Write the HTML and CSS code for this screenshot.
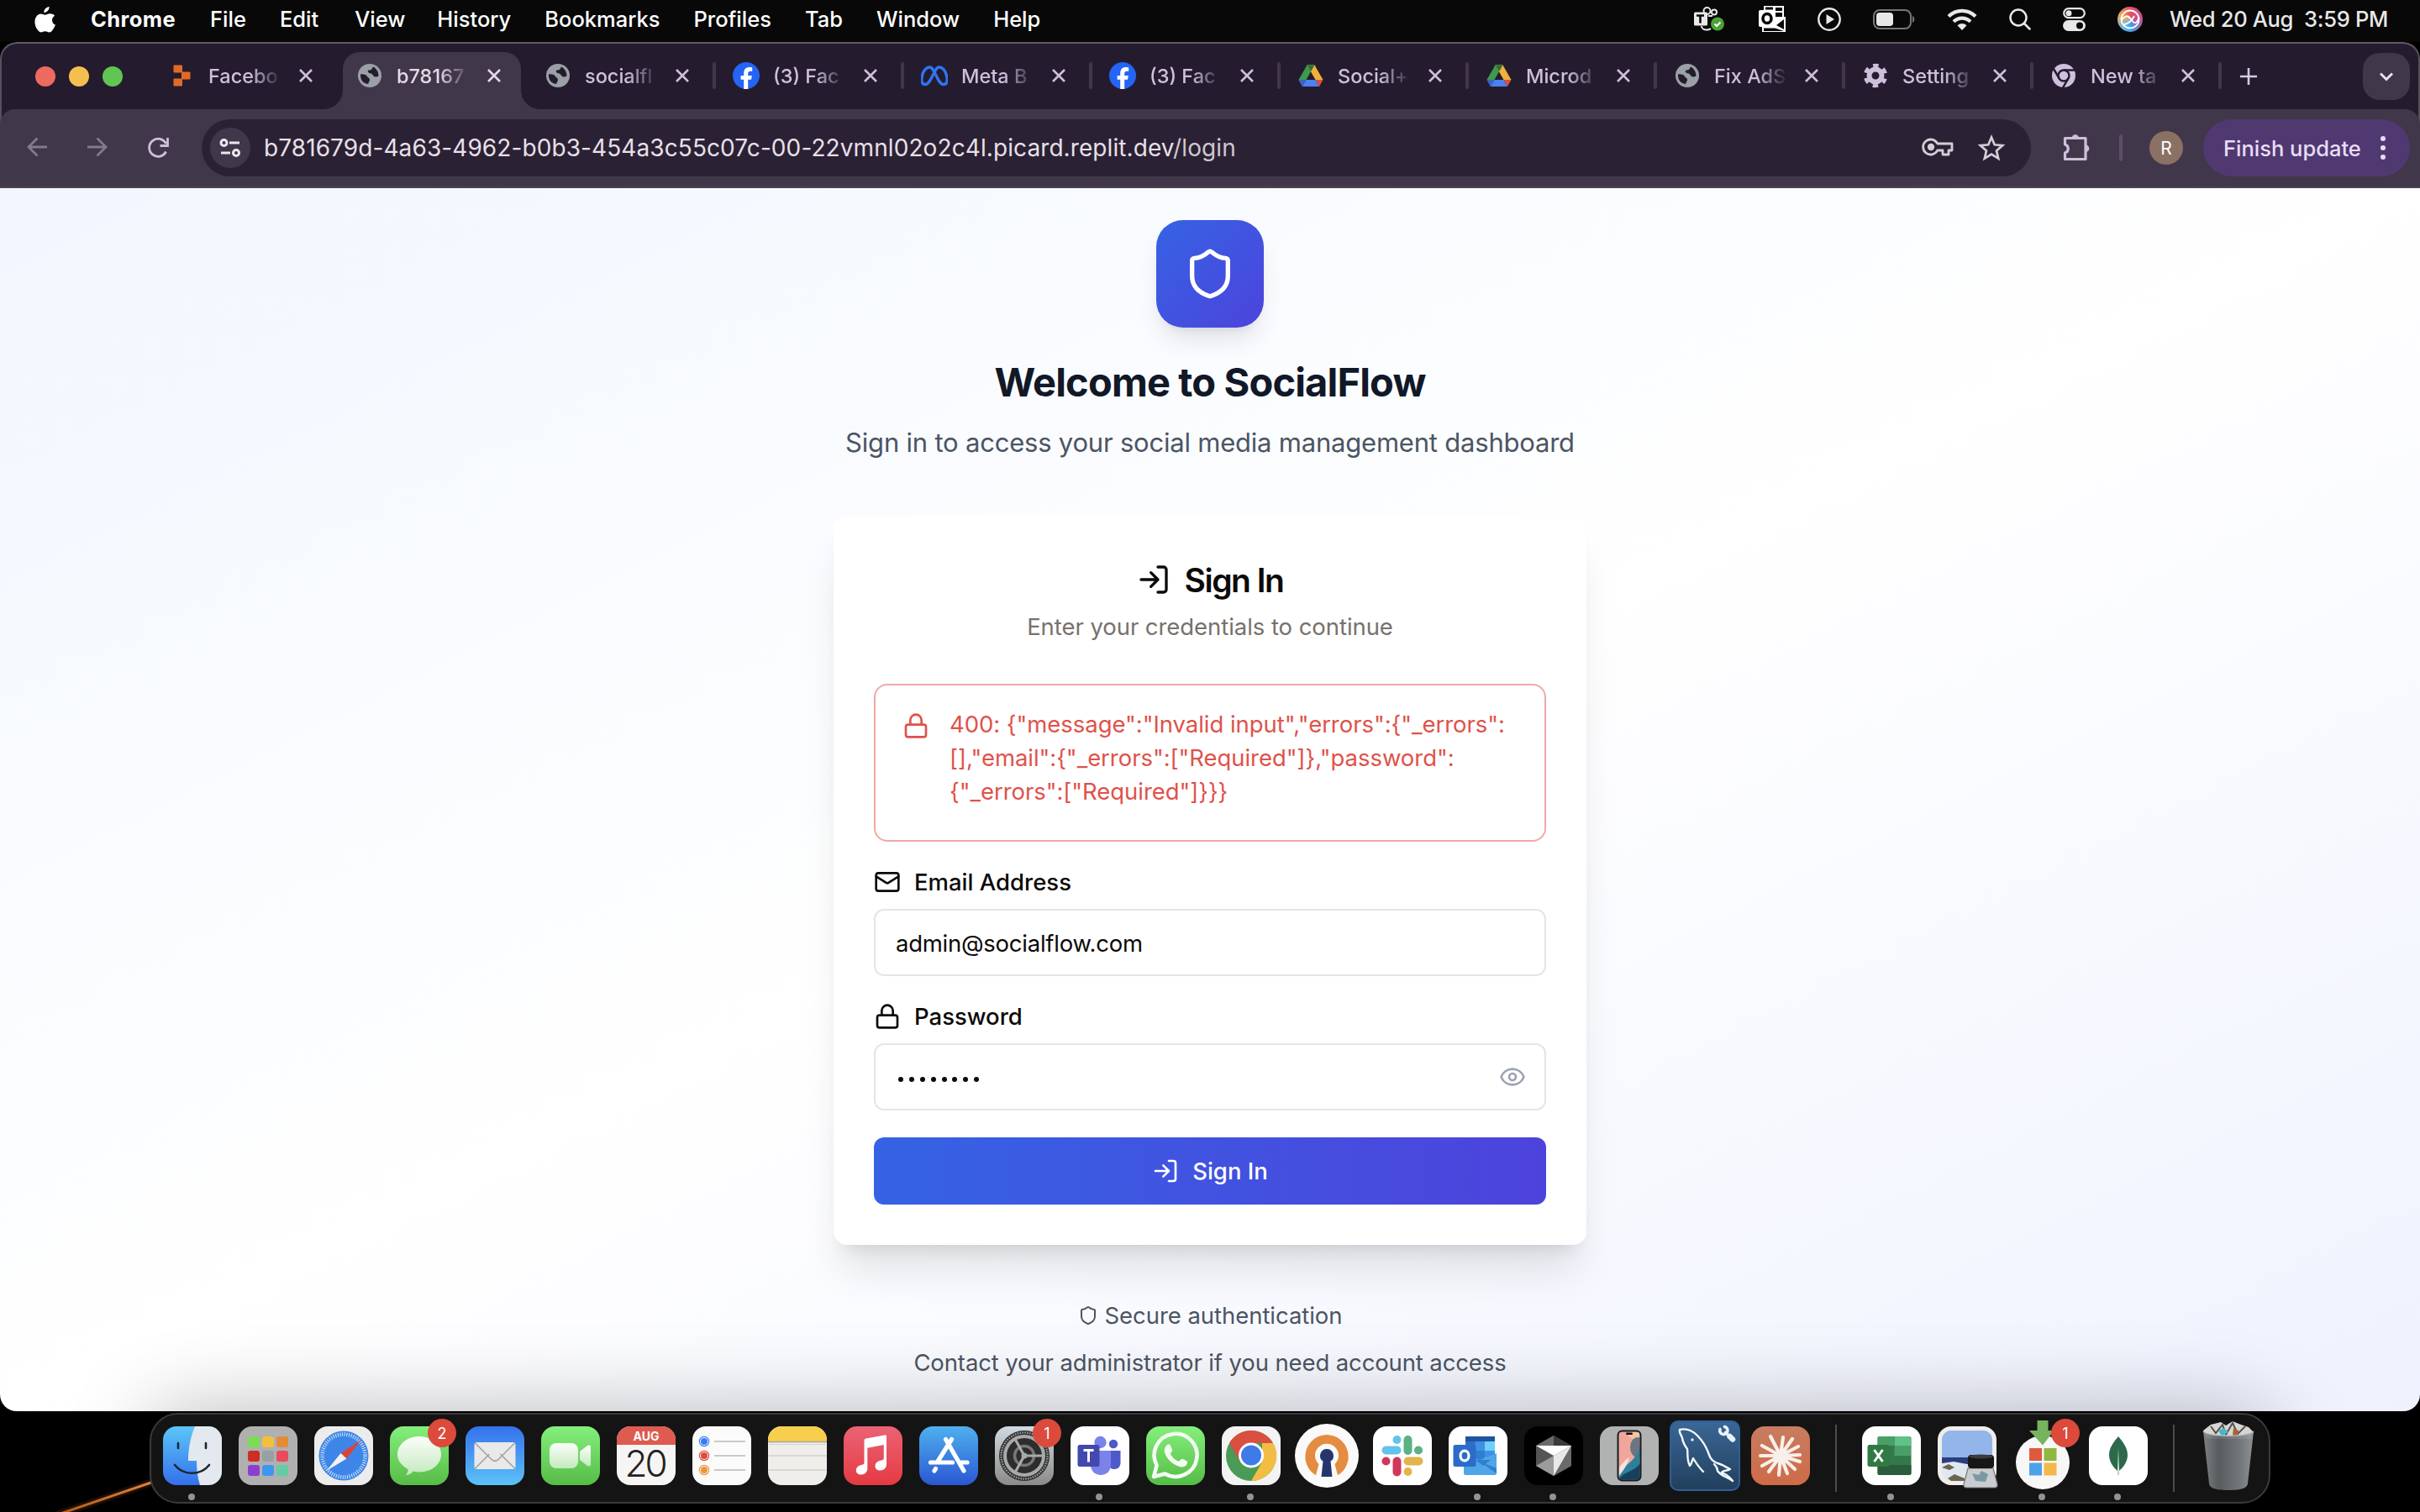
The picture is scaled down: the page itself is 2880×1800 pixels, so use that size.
FILE: index.html
```html
<!DOCTYPE html>
<html lang="en">
<head>
<meta charset="utf-8">
<title>Welcome to SocialFlow</title>
<link rel="stylesheet" href="styles.css">
</head>
<body>
<svg class="defs" width="0" height="0" aria-hidden="true">
  <defs>
    <symbol id="shield" viewBox="0 0 24 24"><path d="M20 13c0 5-3.5 7.5-7.66 8.95a1 1 0 0 1-.67-.01C7.5 20.5 4 18 4 13V6a1 1 0 0 1 1-1c2 0 4.5-1.2 6.24-2.72a1.17 1.17 0 0 1 1.52 0C14.51 3.81 17 5 19 5a1 1 0 0 1 1 1z"/></symbol>
    <symbol id="login" viewBox="0 0 24 24"><path d="M15 3h4a2 2 0 0 1 2 2v14a2 2 0 0 1-2 2h-4M10 17l5-5-5-5M15 12H3"/></symbol>
    <symbol id="lock" viewBox="0 0 24 24"><rect x="3" y="11" width="18" height="11" rx="2"/><path d="M7 11V7a5 5 0 0 1 10 0v4"/></symbol>
    <symbol id="mail" viewBox="0 0 24 24"><rect x="2" y="4" width="20" height="16" rx="2"/><path d="m22 7-8.97 5.7a1.94 1.94 0 0 1-2.06 0L2 7"/></symbol>
    <symbol id="eye" viewBox="0 0 24 24"><path d="M2.06 12.35a1 1 0 0 1 0-.7 10.75 10.75 0 0 1 19.88 0 1 1 0 0 1 0 .7 10.75 10.75 0 0 1-19.88 0"/><circle cx="12" cy="12" r="3"/></symbol>
    <symbol id="close" viewBox="0 0 24 24"><path d="M5 5l14 14M19 5L5 19" fill="none" stroke="currentColor" stroke-width="2.6"/></symbol>
    <symbol id="globe" viewBox="0 0 32 32"><circle cx="16" cy="16" r="14" fill="#9aa0a6"/><path d="M5 14.500c4-.5 7 .5 8 2.500s3 1.500 3 4-2 2.500-1.500 5C8.500 26 4.500 21 5 14.500zM20 5.500c-1.500 2-1 3.500-3.500 3.800s-3.500 1-2 3 3.500.5 4.500 2.200 2.500 3.500 5 3l2.500-1c0-5-2.500-9-6.500-11z" fill="#241c2e"/></symbol>
    <symbol id="facebook" viewBox="0 0 32 32"><circle cx="16" cy="16" r="16" fill="#2465f5"/><path d="M13.200 32V20.800H9.600V16h3.600v-2.300c0-5.400 2.300-7.700 7-7.700.9 0 2.400.2 3 .35v4.400h-1.900c-2.300 0-3.100.9-3.100 3.100V16h4.700l-.9 4.800h-3.800V32z" fill="#fff"/></symbol>
    <symbol id="drive" viewBox="0 0 32 32"><path d="M11.500 3.500h9L16 11.300 8.500 24.500 6 29 1.500 21z" fill="#3f9a4c"/><path d="M11.500 3.500h9l-4.500 7.800z" fill="#2b6c33"/><path d="M11.500 3.500h9L30.500 21h-9z" fill="#f0b03c"/><path d="M11.500 3.500h9L16 11.300z" fill="#2d7038"/><path d="M21.500 21h9L26 29z" fill="#d9503f"/><path d="M10.500 21h11L26 29H6z" fill="#4c82ee"/><path d="M1.500 21h9L6 29z" fill="#3b63c9"/></symbol>
  </defs>
</svg>

<header class="menubar">
  <svg class="apple" viewBox="0 0 26 32"><path d="M17.700 0c.2 1.900-.6 3.700-1.700 5-1.200 1.400-3 2.400-4.700 2.200-.2-1.800.7-3.700 1.700-4.800C14.200 1.100 16.200.1 17.700 0zM24.500 11c-2.100 1.300-3.200 3-3.200 5.400 0 2.700 1.500 4.900 4 5.900-.6 1.900-1.600 3.700-2.700 5.300-1.500 2.200-2.800 3.800-4.900 3.800-2 0-2.600-1.200-5-1.200-2.500 0-3.200 1.200-5.100 1.200-2 0-3.400-1.900-4.900-4C.9 24.800-.3 21.400.1 17.400c.5-5.500 3.900-8.700 7.600-8.700 2.100 0 3.700 1.300 5.200 1.300 1.300 0 3.200-1.400 5.700-1.400 2.200 0 4.500.9 5.900 2.400z" fill="#fff"/></svg>
  <nav class="menus">
    <span class="app-name">Chrome</span><span>File</span><span>Edit</span><span class="view">View</span><span>History</span><span>Bookmarks</span><span>Profiles</span><span>Tab</span><span>Window</span><span>Help</span>
  </nav>
  <div class="status">
    <svg width="36" height="30" viewBox="0 0 36 30"><g fill="none" stroke="#e8e8e8" stroke-width="2"><circle cx="15.500" cy="5" r="4"/><circle cx="24" cy="6.500" r="3"/><path d="M17 11h5M9 23c0 3 3 4.500 6 4.500 3 0 4-.5 5-1.500"/></g><rect x="0" y="6.500" width="16" height="16" rx="1.500" fill="#e8e8e8"/><path d="M3 10.500h9M7.500 10.500v9" stroke="#080808" stroke-width="2.600"/><circle cx="28" cy="20.500" r="8" fill="#4aa336"/><path d="M24.500 20.500l2.500 2.500 4.500-4.500" fill="none" stroke="#fff" stroke-width="2"/></svg>
    <svg width="32" height="34" viewBox="0 0 32 34"><path d="M6 1h24v14H6z" fill="#fff"/><path d="M8 2.500h9v3H8zM20 3h8v4h-8zM20 9h8v5h-8z" fill="#080808"/><path d="M4 14h28v18H4z" fill="#fff"/><path d="M6 27.500h13.500L30 31H6zM21 24l9-7v12z" fill="#080808"/><rect y="6" width="20" height="20" rx="2" fill="#fff"/><ellipse cx="10" cy="16" rx="5" ry="5.500" fill="none" stroke="#080808" stroke-width="3.600"/></svg>
    <svg width="28" height="28" viewBox="0 0 28 28"><circle cx="14" cy="14" r="12.700" fill="none" stroke="#e8e8e8" stroke-width="2.400"/><path d="M10.500 8v12l9.500-6z" fill="#e8e8e8"/></svg>
    <svg width="50" height="24" viewBox="0 0 50 24"><rect x="1" y="1" width="44" height="22" rx="7" fill="none" stroke="#777" stroke-width="2"/><rect x="4" y="4" width="20" height="16" rx="4" fill="#e8e8e8"/><path d="M47 8c3 1 3 7 0 8z" fill="#777"/></svg>
    <svg width="36" height="26" viewBox="0 0 36 26"><g fill="none" stroke="#e8e8e8" stroke-width="4.200"><path d="M2 9.500a22.500 22.500 0 0 1 32 0"/><path d="M8 15.800a14 14 0 0 1 20 0"/></g><path d="M12.500 20.200a8 8 0 0 1 11 0L18 26z" fill="#e8e8e8"/></svg>
    <svg width="26" height="26" viewBox="0 0 26 26"><g fill="none" stroke="#e8e8e8" stroke-width="2.500" stroke-linecap="round"><circle cx="11" cy="11" r="9.500"/><path d="M18 18l6.500 6.500"/></g></svg>
    <svg width="27" height="28" viewBox="0 0 27 28"><rect x="1.200" y="1.200" width="24.600" height="11" rx="5.500" fill="none" stroke="#e8e8e8" stroke-width="2.200"/><circle cx="7" cy="6.700" r="3.500" fill="#e8e8e8"/><rect y="15" width="27" height="13" rx="6.500" fill="#e8e8e8"/><circle cx="20" cy="21.500" r="4" fill="#080808"/></svg>
    <div class="siri"><svg width="30" height="30" viewBox="0 0 30 30"><g fill="none" stroke="#fff" stroke-width="1.800"><circle cx="15" cy="15" r="10.500"/><path d="M5 16c5-7 9-5 12 0s6 4 8-2M8 21c5-1 9-4 12-10"/></g></svg></div>
    <span class="clock">Wed 20 Aug&nbsp; 3:59 PM</span>
  </div>
</header>

<section class="window">
  <div class="chrome-ui">
    <div class="tabstrip">
      <div class="lights"><i class="red"></i><i class="yellow"></i><i class="green"></i></div>
      <div class="tabs">
        <div class="tab"><svg class="fav" viewBox="0 0 32 32"><path d="M7 4h9.500v8H7zM16.500 12H26v8h-9.500zM7 20h9.500v8H7z" fill="#e36a26" stroke="#e36a26" stroke-linejoin="round"/></svg><span class="title">Facebo</span><svg class="x"><use href="#close"/></svg></div>
        <div class="tab active"><svg class="fav"><use href="#globe"/></svg><span class="title">b78167</span><svg class="x"><use href="#close"/></svg></div>
        <div class="tab sep"><svg class="fav"><use href="#globe"/></svg><span class="title">socialfl</span><svg class="x"><use href="#close"/></svg></div>
        <div class="tab sep"><svg class="fav"><use href="#facebook"/></svg><span class="title">(3) Fac</span><svg class="x"><use href="#close"/></svg></div>
        <div class="tab sep"><svg class="fav" viewBox="0 0 32 32"><path d="M5 26.500C1 26.500 0 22 1.500 16S6.500 6 10.500 6c6 0 9 20.500 16.500 20.500 4 0 5-4.500 3.500-10.500S25.500 6 21.500 6c-6 0-9 20.500-16.500 20.500z" fill="none" stroke="#2f74f3" stroke-width="3.400"/></svg><span class="title">Meta B</span><svg class="x"><use href="#close"/></svg></div>
        <div class="tab sep"><svg class="fav"><use href="#facebook"/></svg><span class="title">(3) Fac</span><svg class="x"><use href="#close"/></svg></div>
        <div class="tab sep"><svg class="fav"><use href="#drive"/></svg><span class="title">Social+</span><svg class="x"><use href="#close"/></svg></div>
        <div class="tab sep"><svg class="fav"><use href="#drive"/></svg><span class="title">Microd</span><svg class="x"><use href="#close"/></svg></div>
        <div class="tab sep"><svg class="fav"><use href="#globe"/></svg><span class="title">Fix AdS</span><svg class="x"><use href="#close"/></svg></div>
        <div class="tab sep"><svg class="fav" viewBox="0 0 32 32"><g fill="none" stroke="#cdc0dc"><circle cx="16" cy="16" r="7.500" stroke-width="6"/><circle cx="16" cy="16" r="12" stroke-width="4.500" stroke-dasharray="6.280 6.280" stroke-dashoffset="3.140" transform="rotate(30 16 16)"/></g></svg><span class="title">Setting</span><svg class="x"><use href="#close"/></svg></div>
        <div class="tab sep"><svg class="fav" viewBox="0 0 32 32"><circle cx="16" cy="16" r="14" fill="#cdc0dc"/><circle cx="16" cy="16" r="6.500" fill="none" stroke="#241c2e" stroke-width="2.500"/><path d="M16 9.600h13M10.500 19.200L4 8M21.500 19.200L15 30.500" stroke="#241c2e" stroke-width="2.500"/></svg><span class="title">New ta</span><svg class="x"><use href="#close"/></svg></div>
      </div>
      <svg class="plus" viewBox="0 0 24 24"><path d="M12 2v20M2 12h20" stroke="#d6cbe2" stroke-width="2.600"/></svg>
      <div class="tab-search"><svg width="20" height="20" viewBox="0 0 20 20"><path d="M3 6.500l7 7 7-7" fill="none" stroke="#eae2f2" stroke-width="3"/></svg></div>
    </div>
    <div class="toolbar">
      <div class="nav-buttons">
        <svg class="dim" width="24" height="24" viewBox="0 0 24 24"><path d="M24 12H2M12.500 1.500L2 12l10.500 10.500"/></svg>
        <svg class="dim" width="24" height="24" viewBox="0 0 24 24"><path d="M0 12h22M11.500 1.500L22 12 11.500 22.500"/></svg>
        <svg width="26" height="26" viewBox="0 0 26 26"><path d="M21.500 17.500A10.500 10.500 0 1 1 21.500 8M23.500 1v9.500H14.500"/></svg>
      </div>
      <div class="omnibox">
        <div class="site-info"><svg width="26" height="24" viewBox="0 0 26 24"><g fill="none" stroke="#ece6ef" stroke-width="3"><circle cx="5.500" cy="6" r="3.500"/><path d="M12 6h12M2 18h11"/><circle cx="20" cy="18" r="3.500"/></g></svg></div>
        <span class="url">b781679d-4a63-4962-b0b3-454a3c55c07c-00-22vmnl02o2c4l.picard.replit.dev<span class="path">/login</span></span>
        <svg class="key" width="38" height="24" viewBox="0 0 38 24"><g fill="none" stroke="#d4cdd5" stroke-width="2.800"><path d="M18.700 7A9 9 0 1 0 18.700 15H25v5h7v-5h4V7z" stroke-linejoin="round"/></g><circle cx="11" cy="11" r="4.200" fill="#d4cdd5"/></svg>
        <svg class="star" width="32" height="32" viewBox="0 0 32 32"><path d="M16 3.500l3.700 8.800 9.500.8-7.200 6.300 2.200 9.300-8.200-5-8.200 5 2.200-9.300-7.200-6.300 9.500-.8z" fill="none" stroke="#d4cdd5" stroke-width="2.700"/></svg>
      </div>
      <svg class="puzzle" width="36" height="36" viewBox="0 0 36 36"><path d="M4.500 6.500H29v25H4.500v-7.500c5-1.500 5-8.500 0-10z" fill="none" stroke="#cdc0dc" stroke-width="3.200" stroke-linejoin="round"/><path d="M12.500 6.500a4.300 4.300 0 0 1 8.600 0zM29 14.500a4.300 4.300 0 0 1 0 8.600z" fill="#cdc0dc"/></svg>
      <i class="divider"></i>
      <div class="avatar">R</div>
      <div class="update"><span>Finish update</span><i class="kebab"></i></div>
    </div>
  </div>

  <main class="page">
    <div class="logo"><svg class="icon" width="64" height="64"><use href="#shield"/></svg></div>
    <h1>Welcome to SocialFlow</h1>
    <p class="subtitle">Sign in to access your social media management dashboard</p>
    <div class="card">
      <div class="card-title"><svg class="icon" width="40" height="40"><use href="#login"/></svg><h2>Sign In</h2></div>
      <p class="card-desc">Enter your credentials to continue</p>
      <div class="alert">
        <svg class="icon" width="32" height="32"><use href="#lock"/></svg>
        <p>400: {"message":"Invalid input","errors":{"_errors":<br>[],"email":{"_errors":["Required"]},"password":<br>{"_errors":["Required"]}}}</p>
      </div>
      <div class="label"><svg class="icon" width="32" height="32"><use href="#mail"/></svg><span>Email Address</span></div>
      <div class="input"><span class="email">admin@socialflow.com</span></div>
      <div class="label"><svg class="icon" width="32" height="32"><use href="#lock"/></svg><span>Password</span></div>
      <div class="input"><span class="dots"><i></i><i></i><i></i><i></i><i></i><i></i><i></i><i></i></span><svg class="icon eye" width="32" height="32"><use href="#eye"/></svg></div>
      <div class="submit"><svg class="icon" width="32" height="32"><use href="#login"/></svg><span>Sign In</span></div>
    </div>
    <div class="note"><svg class="icon" width="24" height="24"><use href="#shield"/></svg><span>Secure authentication</span></div>
    <p class="contact">Contact your administrator if you need account access</p>
    <div class="dock-shade"></div>
  </main>
</section>

<footer class="desktop">
  <svg class="streak" viewBox="0 0 220 120"><defs><linearGradient id="st" x1="0" x2="1"><stop offset="0" stop-color="#b0591c"/><stop offset="1" stop-color="#e08a45"/></linearGradient></defs><path d="M66 124L200 78" stroke="#5a2c0c" stroke-width="9" opacity=".35"/><path d="M66 124L200 78" stroke="url(#st)" stroke-width="3"/></svg>
  <div class="dock">
    <div class="cell run"><svg viewBox="0 0 70 70"><defs><linearGradient id="f1" x2="0" y2="1"><stop stop-color="#5cc6f8"/><stop offset="1" stop-color="#3470ec"/></linearGradient><clipPath id="sq"><rect width="70" height="70" rx="16"/></clipPath></defs><g clip-path="url(#sq)"><path d="M0 0h70v70H0z" fill="url(#f1)"/><path d="M38 0C33 12 30 26 30 41h10c0 10 1 20 4 29h26V0z" fill="#e4e8ef"/></g><path d="M18 20v6M51 20v6M14 46c10 13 31 13 41 0" fill="none" stroke="#1d2733" stroke-width="2.600" stroke-linecap="round"/></svg></div>
    <div class="cell"><svg viewBox="0 0 70 70"><rect width="70" height="70" rx="16" fill="#b0b0b0"/><g><rect x="11" y="12" width="14" height="13" rx="3" fill="#79dd52"/><rect x="28" y="12" width="14" height="13" rx="3" fill="#f3bf3e"/><rect x="45" y="12" width="14" height="13" rx="3" fill="#e58b35"/><rect x="11" y="29" width="14" height="13" rx="3" fill="#cb2f24"/><rect x="28" y="29" width="14" height="13" rx="3" fill="#96a0a5"/><rect x="45" y="29" width="14" height="13" rx="3" fill="#e94b5d"/><rect x="11" y="46" width="14" height="13" rx="3" fill="#8c3fce"/><rect x="28" y="46" width="14" height="13" rx="3" fill="#3c97f3"/><rect x="45" y="46" width="14" height="13" rx="3" fill="#62cda5"/></g></svg></div>
    <div class="cell"><svg viewBox="0 0 70 70"><rect width="70" height="70" rx="16" fill="#ececec"/><circle cx="35" cy="35" r="29.500" fill="#3d86e8"/><circle cx="35" cy="35" r="25.500" fill="none" stroke="#d7e8fb" stroke-width="4.500" stroke-dasharray="1 1.670"/><path d="M56 16L38.500 38.500 31.500 32z" fill="#dc4437"/><path d="M14.500 53L38.500 38.500 31.500 32z" fill="#f2f2f2"/></svg></div>
    <div class="cell"><svg viewBox="0 0 70 70"><defs><linearGradient id="gr" x2="0" y2="1"><stop stop-color="#84ef7c"/><stop offset="1" stop-color="#56bc47"/></linearGradient><linearGradient id="bb" x2="0" y2="1"><stop stop-color="#fbfefb"/><stop offset="1" stop-color="#c4e9bd"/></linearGradient></defs><rect width="70" height="70" rx="16" fill="url(#gr)"/><path d="M35 12c14.500 0 26 9.500 26 21.500S49.500 54.500 35 54.500c-2.500 0-5-.3-7.200-.9-2 2.600-5 4.200-9 4.600 2-2 3-4.500 2.600-7.300C14 47 9 40.700 9 33.500 9 21.500 20.500 12 35 12z" fill="url(#bb)"/></svg><b class="badge">2</b></div>
    <div class="cell"><svg viewBox="0 0 70 70"><defs><linearGradient id="ml" x2="0" y2="1"><stop stop-color="#3571ec"/><stop offset="1" stop-color="#5cc2f7"/></linearGradient></defs><rect width="70" height="70" rx="16" fill="url(#ml)"/><rect x="10.500" y="19" width="49" height="32" rx="3" fill="#e9e9e9"/><path d="M11.500 50l17-17M58.500 50l-17-17M11.500 20l19 19c3 3 6 3 9 0l19-19" fill="none" stroke="#a5a5a5" stroke-width="1.700"/></svg></div>
    <div class="cell"><svg viewBox="0 0 70 70"><rect width="70" height="70" rx="16" fill="url(#gr)"/><rect x="10" y="20" width="34" height="30" rx="8" fill="url(#bb)"/><path d="M46 30l9-7c2-1 4-.5 4 1.500v21c0 2-2 2.500-4 1.500l-9-7z" fill="url(#bb)"/></svg></div>
    <div class="cell"><svg viewBox="0 0 70 70"><g clip-path="url(#sq)"><path d="M0 0h70v70H0z" fill="#f6f5f3"/><path d="M0 0h70v22H0z" fill="#de5b4f"/></g><text x="35" y="17" class="cal-month">AUG</text><text x="33.500" y="60" class="cal-day">20</text></svg></div>
    <div class="cell"><svg viewBox="0 0 70 70"><rect width="70" height="70" rx="16" fill="#fbfbfb"/><path d="M26 18h37M26 35h37M26 52h37" stroke="#b9b9b9" stroke-width="1.400"/><g fill="none" stroke-width="1.200"><circle cx="14" cy="18" r="5.600" stroke="#3a7bf0"/><circle cx="14" cy="35" r="5.600" stroke="#df4a3a"/><circle cx="14" cy="52" r="5.600" stroke="#e9973a"/></g><circle cx="14" cy="18" r="4" fill="#3a7bf0"/><circle cx="14" cy="35" r="4" fill="#df4a3a"/><circle cx="14" cy="52" r="4" fill="#e9973a"/></svg></div>
    <div class="cell"><svg viewBox="0 0 70 70"><g clip-path="url(#sq)"><path d="M0 0h70v70H0z" fill="#efeeea"/><path d="M0 0h70v18H0z" fill="#f8cf4d"/><path d="M0 18.500h70" stroke="#a9a59a" stroke-width="1.500"/><path d="M2 21.500h66" stroke="#b9b7b0" stroke-dasharray="1.200 1.200"/><path d="M0 35h70M0 52h70" stroke="#d2d1cc" stroke-width="1.400"/></g></svg></div>
    <div class="cell"><svg viewBox="0 0 70 70"><defs><linearGradient id="mu" x2="0" y2="1"><stop stop-color="#eb6375"/><stop offset="1" stop-color="#e53a42"/></linearGradient></defs><rect width="70" height="70" rx="16" fill="url(#mu)"/><path d="M24.500 17c0-1.500.8-2.300 2.200-2.600l22-4c1.500-.3 2.300.4 2.300 1.800V45c0 4.500-3 7.500-7.500 7.500-3.500 0-6-2-6-5 0-4 3-6 6.500-6.700 3-.6 3.800-1 3.800-3V22l-19.500 3.700V50c0 4.500-3 7.500-7.500 7.500-3.500 0-6-2-6-5 0-4 3-5.900 6.500-6.600 2.500-.5 3.200-1.200 3.200-3z" fill="#fff"/></svg></div>
    <div class="cell"><svg viewBox="0 0 70 70"><defs><linearGradient id="as" x2="0" y2="1"><stop stop-color="#4fb0ee"/><stop offset="1" stop-color="#2a57d3"/></linearGradient></defs><rect width="70" height="70" rx="16" fill="url(#as)"/><g stroke="#fff" stroke-width="5.200" stroke-linecap="round"><path d="M38.500 15.500L22.500 41M31.500 15.500L53 53M18 53l1.500-2.500M13.500 43h26M48 43h9"/></g></svg></div>
    <div class="cell"><svg viewBox="0 0 70 70"><defs><linearGradient id="se" x2="0" y2="1"><stop stop-color="#cfdbe2"/><stop offset="1" stop-color="#8b8a87"/></linearGradient></defs><rect width="70" height="70" rx="16" fill="url(#se)"/><circle cx="35" cy="35" r="30" fill="#2d2d2d"/><circle cx="35" cy="35" r="27.500" fill="none" stroke="#999" stroke-width="2.500" stroke-dasharray="1.600 1.280"/><g fill="none" stroke="#a7aaab"><circle cx="35" cy="35" r="23" stroke-width="4"/><circle cx="35" cy="35" r="11.500" stroke-width="3.500" stroke="#777"/><path d="M35 35h21M35 35L24.500 16M35 35L24.500 54" stroke-width="3.200"/></g><circle cx="35" cy="35" r="3.500" fill="#a7aaab"/></svg><b class="badge">1</b></div>
    <div class="cell run"><svg viewBox="0 0 70 70"><rect width="70" height="70" rx="16" fill="#fff"/><circle cx="35.500" cy="19" r="7.200" fill="#7b83eb"/><circle cx="51" cy="21" r="5.200" fill="#5059c9"/><path d="M46 29h13.500v14c0 5-3 8-7 8s-7-2-7-6z" fill="#5059c9"/><path d="M24 29h24v17c0 7-5 12-12 12S24 53 24 46z" fill="#7b83eb"/><rect x="8.500" y="22" width="26" height="26" rx="2.500" fill="#4248ae"/><path d="M15.500 28.500h12M21.500 28.500v14" stroke="#fff" stroke-width="3"/></svg></div>
    <div class="cell"><svg viewBox="0 0 70 70"><rect width="70" height="70" rx="16" fill="url(#gr)"/><path d="M9 60l3.700-13.500A25.500 25.500 0 1 1 22.500 56.500z" fill="none" stroke="#f3fbf2" stroke-width="4.600" stroke-linejoin="round"/><path d="M24.500 22.500c1.500-1.700 3.500-1.500 4.300.3l2.200 5c.5 1.200-.2 2.300-2.200 4.700 2 4.500 5.500 7.500 10.200 9.300 2.500-3 3-3.500 4.300-3l5 2.500c1.500.9.800 3.500-.8 5.200-2 2-5 2.500-8.500 1.300C31 45 25.500 39.500 22.500 32.500c-1.500-4-.5-7.500 2-10z" fill="#f3fbf2"/></svg></div>
    <div class="cell run"><svg viewBox="0 0 70 70"><rect width="70" height="70" rx="16" fill="#f3f3f3"/><circle cx="35" cy="35" r="30" fill="#4a9b55"/><path d="M9 20a30 30 0 0 1 52 0H35v15z" fill="#d94f40"/><path d="M9 20l13 22.500L35 20z" fill="#d94f40"/><path d="M61 20A30 30 0 0 1 35 65l13-22.500V20z" fill="#f3bd43"/><circle cx="35" cy="34.500" r="15" fill="#fff"/><circle cx="35" cy="34.500" r="12" fill="#4079e8"/></svg></div>
    <div class="cell"><svg class="ovpn" viewBox="0 0 76 76"><circle cx="38" cy="38" r="38" fill="#fafafa"/><path d="M38 13a26 26 0 0 0-13 48.300L28.500 48a14 14 0 1 1 19 0L51 61.300A26 26 0 0 0 38 13z" fill="#e58c40"/><path d="M38 30a8 8 0 0 0-4.500 14.600L31.500 63h13l-2-18.400A8 8 0 0 0 38 30z" fill="#26356b"/></svg></div>
    <div class="cell"><svg viewBox="0 0 70 70"><rect width="70" height="70" rx="16" fill="#fff"/><g stroke-width="10" stroke-linecap="round"><path d="M15.500 28.500h13" stroke="#64c3ec"/><path d="M28.500 16h.01" stroke="#64c3ec"/><path d="M41.500 16v13" stroke="#5bb282"/><path d="M54 28.500h.01" stroke="#5bb282"/><path d="M41.500 41.500h13" stroke="#e2b44a"/><path d="M41.500 54h.01" stroke="#e2b44a"/><path d="M28.500 41.500v13" stroke="#cf375c"/><path d="M15.500 41.500h.01" stroke="#cf375c"/></g></svg></div>
    <div class="cell run"><svg viewBox="0 0 70 70"><rect width="70" height="70" rx="16" fill="#fff"/><path d="M20 14a2 2 0 0 1 2-2h31a2 2 0 0 1 2 2v16H20z" fill="#2b6fc9"/><path d="M20 12h35v6H20z" fill="#1f559f"/><path d="M43 18h12v11H43z" fill="#6fd1fa"/><path d="M31.500 18H43v11H31.500z" fill="#3e92e3"/><path d="M31.500 29H43v11H31.500z" fill="#2f7fd0"/><path d="M43 29h12v8H43z" fill="#3e92e3"/><path d="M18 32l19 8 20-8v24a2 2 0 0 1-2 2H20a2 2 0 0 1-2-2z" fill="#4fa5e6"/><path d="M32 40h18l-9 7zM57 56L37 42l20 8z" fill="#2f7fd0"/><rect x="5.500" y="22" width="27" height="26" rx="2.500" fill="#2b6cc9"/><ellipse cx="19" cy="35" rx="5" ry="5.800" fill="none" stroke="#fff" stroke-width="3.200"/></svg></div>
    <div class="cell run"><svg viewBox="0 0 70 70"><rect width="70" height="70" rx="16" fill="#000"/><path d="M35 11l21 12v24L35 59 14 47V23z" fill="#555"/><path d="M35 11l21 12H14z" fill="#3b3b3b"/><path d="M35 11v12H14z" fill="#6b6b6b"/><path d="M14 23h42L35 35z" fill="#fff"/><path d="M35 35v24L14 47z" fill="#9b9b9b"/><path d="M56 23v24L35 59z" fill="#6a6a6a"/><path d="M56 23L35 59V35z" fill="#e8e8e8"/></svg></div>
    <div class="cell"><svg viewBox="0 0 70 70"><defs><clipPath id="ph"><rect x="22.500" y="6.500" width="25" height="57" rx="4"/></clipPath></defs><rect width="70" height="70" rx="16" fill="#b1b3b3"/><g clip-path="url(#ph)"><path d="M22 6h26v58H22z" fill="#f0a69b"/><path d="M48 6v14L34 12V6z" fill="#f4c4a0"/><ellipse cx="45" cy="25" rx="9" ry="12" fill="#6b7482"/><path d="M22 64c2-20 18-16 26-40v40z" fill="#2a819b"/><path d="M22 64c5-10 20-10 26-20v20z" fill="#16405d"/><path d="M22 60c6-7 11-15 13-23-6 4-11 10-13 14z" fill="#f8e2dc"/></g><rect x="21.500" y="5.500" width="27" height="59" rx="5" fill="none" stroke="#191c20" stroke-width="2"/><rect x="31" y="7.500" width="8" height="2.500" rx="1.200" fill="#111"/></svg></div>
    <div class="cell"><svg class="mysql" viewBox="0 0 84 84"><defs><linearGradient id="my" x2="0" y2="1"><stop stop-color="#3a6897"/><stop offset="1" stop-color="#223f5c"/></linearGradient></defs><rect x="1" y="1" width="82" height="82" rx="9" fill="url(#my)" stroke="#2f5f95" stroke-width="2"/><path d="M12 11c8-2 15 1 21 7s11 14 14 23c2 6 5 8 10 10 5 1 9 4 15 7-3 2-8 1-10 4 5 2 9 4 13 10-7-5-14-6-18-12 0-3-1-5-4-8M12 11c-1 4 2 6 3 10 1 6 3 9 6 13 1 6-1 12 3 20 2-1 2-5 4-9 3 5 7 11 12 16" fill="none" stroke="#f3f8fc" stroke-width="2.400" stroke-linejoin="round" stroke-linecap="round"/><circle cx="27" cy="23" r="1.700" fill="#f3f8fc"/><g fill="none" stroke="#e8f2fa" stroke-linecap="round"><path d="M60 10.500a4.600 4.600 0 1 0 5.500-3" stroke-width="3.600"/><path d="M66.500 14.500l4 3.500" stroke-width="3.600"/><path d="M71.500 19l3.500 3.500" stroke-width="6.500"/></g></svg></div>
    <div class="cell"><svg viewBox="0 0 70 70"><defs><linearGradient id="cl" x2="0" y2="1"><stop stop-color="#c87c60"/><stop offset="1" stop-color="#cf6b47"/></linearGradient></defs><rect width="70" height="70" rx="16" fill="url(#cl)"/><g stroke="#f9efea" stroke-width="4.200" stroke-linecap="round"><path d="M35 35L23 12M35 35l3-22M35 35l14-20M35 35l21-11M35 35l23-1M35 35l23 7M35 35l17 16M35 35l8 21M35 35l-2 23M35 35L21 54M35 35L13 47M35 35L11 35M35 35L13 23"/></g></svg></div>
    <i class="rule"></i>
    <div class="cell run"><svg viewBox="0 0 70 70"><rect width="70" height="70" rx="16" fill="#fff"/><rect x="18.500" y="12" width="40" height="46" rx="2.500" fill="#33794a"/><path d="M38.500 12H56a2 2 0 0 1 2 2v9H38.500z" fill="#60c288"/><path d="M18.500 14a2 2 0 0 1 2-2h18v11h-20zM38.500 23H58v12H38.500z" fill="#4a9f69"/><path d="M18.500 46h40v10a2 2 0 0 1-2 2h-36a2 2 0 0 1-2-2z" fill="#2b5c3b"/><rect x="6.500" y="22" width="26" height="26" rx="2.500" fill="#2f7a42"/><path d="M14.500 28l10 14M24.500 28l-10 14" stroke="#fff" stroke-width="3"/></svg></div>
    <div class="cell"><svg class="wide" viewBox="0 0 74 74"><rect width="70" height="70" rx="16" fill="#efeeec"/><path d="M5 37V16a11 11 0 0 1 11-11h38a11 11 0 0 1 11 11v21z" fill="#94b5ea"/><path d="M5 37h60v10H5z" fill="#2b3f7c"/><path d="M5 44l14-2 16 3 30-1v15a6 6 0 0 1-6 6H16A11 11 0 0 1 5 54z" fill="#dfe8f1"/><path d="M5 49l8-4 7 4-6 3zM12 62l8-5 12 5v3H16z" fill="#6e6350"/><path d="M36 50h30l5 19c.5 2.500-1 4-3 4H34c-2 0-3.500-1.500-3-4z" fill="#c9cdd0" stroke="#777" stroke-width="1.200"/><path d="M41 56l8 2 3-5 8 4-3 9-12-1z" fill="#7d98a5"/><rect x="36" y="34" width="31" height="16" rx="4" fill="#161616"/><ellipse cx="51.500" cy="36" rx="14" ry="2.600" fill="#3c3c3c"/></svg></div>
    <div class="cell run"><svg class="mau" viewBox="0 0 76 84"><circle cx="38" cy="50" r="32" fill="#f7f7f7"/><path d="M22 33h15v15H22z" fill="#de5a3d"/><path d="M39.500 33h15v15h-15z" fill="#90b83e"/><path d="M22 50.500h15v15H22z" fill="#4ea2e8"/><path d="M39.500 50.500h15v15h-15z" fill="#f2b848"/><path d="M31.500 0h13v12h7L38 29.500 22 12h9.500z" fill="#76b35e"/></svg><b class="badge">1</b></div>
    <div class="cell run"><svg viewBox="0 0 70 70"><rect width="70" height="70" rx="16" fill="#fff"/><path d="M35 12c6 7 11 14 11 22S41 49 36 53l-1 6-1-6c-5-4-10-11-10-19s5-15 11-22z" fill="#2c6a4b"/><path d="M35 26l1 27-1 6-1-6z" fill="#d8e8dc"/></svg></div>
    <i class="rule"></i>
    <div class="cell"><svg class="trash" viewBox="0 0 62 82"><defs><linearGradient id="tr"><stop stop-color="#86898b"/><stop offset=".3" stop-color="#5d6265"/><stop offset=".7" stop-color="#777c7f"/><stop offset="1" stop-color="#979a9c"/></linearGradient></defs><path d="M1 11L10 4l12-3 6 4 8-5 10 4 9 3 6 6-4 8H6z" fill="#d6d6d4"/><path d="M10 6l6 8 8-10 4 12 8-14 6 13 9-9" fill="none" stroke="#55524f" stroke-width="2"/><path d="M19 11l7-3 5 5-8 5z" fill="#4bb5c7"/><path d="M37 8l6 3-1 8-6-2z" fill="#ae6031"/><path d="M1 12c8 7 52 7 60 0l-7 62c-.5 5-6 8-23 8S8.500 79 8 74z" fill="url(#tr)" opacity=".93"/><path d="M1 12c8 7 52 7 60 0" fill="none" stroke="#b8baba" stroke-width="1.600"/></svg></div>
  </div>
</footer>
</body>
</html>
```
FILE: styles.css
```css
* { box-sizing: border-box; }
html, body { margin: 0; }
body {
  width: 2880px; height: 1800px; overflow: hidden;
  display: flex; flex-direction: column;
  background: #000;
  font-family: Inter, "Liberation Sans", sans-serif;
  -webkit-font-smoothing: antialiased;
}
h1, h2, p { margin: 0; }
svg { flex: none; display: block; }
i { display: block; }
.defs { position: absolute; }

/* menu bar */
.menubar {
  height: 50px; flex: none;
  display: flex; align-items: center;
  padding: 0 38px 4px 41px;
  background: #080808; color: #fff;
  font-size: 25.5px; font-weight: 500;
}
.apple { width: 26px; height: 31px; }
.menus { display: flex; gap: 40px; margin: -2px 0 0 41px; }
.menus .app-name { font-weight: 700; letter-spacing: .4px; margin-right: 1px; }
.menus .view { margin: 0 -2px 0 3px; }
.status { margin-left: auto; display: flex; align-items: center; gap: 38px; color: #e8e8e8; }
.status svg:first-child { margin-right: 3px; }
.siri {
  width: 30px; height: 30px; border-radius: 50%;
  background: conic-gradient(#e4505f, #c94f92 90deg, #3fa0e8 170deg, #67b9e6 220deg, #ecab55 290deg, #e4505f);
}
.clock { margin: -2px 0 0 -6px; letter-spacing: -.3px; white-space: nowrap; }

/* browser window */
.window {
  height: 1630px; flex: none;
  display: flex; flex-direction: column;
  border-radius: 20px; overflow: hidden;
}
.chrome-ui {
  height: 174px; flex: none;
  background: #241c2e;
  border-top: 2px solid #615b66;
  border-bottom: 2px solid #48434c;
  border-radius: 20px 20px 0 0;
  box-shadow: inset 2px 0 #55505b, inset -2px 0 #55505b;
}
.tabstrip { height: 78px; display: flex; align-items: center; padding: 0 12px 0 42px; }
.lights { display: flex; gap: 16px; width: 136px; }
.lights i { width: 24px; height: 24px; border-radius: 50%; }
.red { background: #ed6a5f; }
.yellow { background: #f5bf4f; }
.green { background: #61c554; }
.tabs { display: flex; align-self: stretch; }
.tab {
  width: 224px; position: relative;
  display: flex; align-items: center;
  padding: 0 0 2px 22px;
  color: #cdc0dc; font-size: 23.500px; font-weight: 500;
}
.tab.active {
  width: 212px; margin: 10px 6px 0; padding: 0 0 12px 16px;
  background: #41374a; color: #e3dae6;
  border-radius: 20px 20px 0 0;
}
.tab.active::before, .tab.active::after {
  content: ""; position: absolute; bottom: 0; width: 22px; height: 22px;
}
.tab.active::before { right: 100%; background: radial-gradient(circle at 0 0, transparent 21.5px, #41374a 22px); }
.tab.active::after { left: 100%; background: radial-gradient(circle at 100% 0, transparent 21.5px, #41374a 22px); }
.tab.sep::after {
  content: ""; position: absolute; right: -2px; top: 22px;
  width: 4px; height: 32px; border-radius: 2px; background: #41374a;
}
.fav { width: 32px; height: 32px; }
.title {
  width: 84px; margin: 0 20px 0 16px; white-space: nowrap;
  -webkit-mask-image: linear-gradient(90deg, #000 60%, transparent 104%);
  mask-image: linear-gradient(90deg, #000 60%, transparent 104%);
}
.x { width: 24px; height: 24px; }
.plus { width: 24px; height: 24px; margin-left: 22px; }
.tab-search {
  width: 56px; height: 56px; margin-left: auto; border-radius: 20px;
  display: grid; place-items: center; background: #41374a;
}
.toolbar {
  height: 92px; display: flex; align-items: center;
  padding: 0 12px 0 32px;
  background: #41374a; border-radius: 18px 18px 0 0;
}
.nav-buttons { width: 208px; display: flex; gap: 48px; }
.nav-buttons svg { fill: none; stroke: #cdc0dc; stroke-width: 2.8; }
.nav-buttons .dim { stroke: #847a8d; }
.omnibox {
  width: 2177px; height: 68px; border-radius: 34px;
  display: flex; align-items: center;
  padding: 0 31px 0 10px; background: #2b2134;
}
.site-info { width: 48px; height: 48px; border-radius: 50%; display: grid; place-items: center; background: #41374a; }
.url { margin-left: 16px; font-size: 28px; letter-spacing: .09px; color: #e8e0e9; }
.url .path { color: #cfc7d0; }
.key { margin-left: auto; }
.star { margin-left: 29px; }
.puzzle { margin-left: 36px; }
.divider { width: 4px; height: 32px; border-radius: 2px; margin-left: 33px; background: #5a4f64; }
.avatar {
  width: 40px; height: 40px; margin-left: 32px; border-radius: 50%;
  display: grid; place-items: center;
  background: #8a7163; color: #fff; font-size: 21px;
}
.update {
  width: 246px; height: 68px; margin-left: auto; border-radius: 34px;
  display: flex; align-items: center; justify-content: space-between;
  padding: 0 29px 0 24px;
  background: #503971; color: #e8dcf5; font-size: 25.500px; font-weight: 500; white-space: nowrap;
}
.kebab { width: 6px; height: 6px; border-radius: 50%; background: currentColor; box-shadow: 0 -11px, 0 11px; }

/* login page */
.page {
  height: 1456px; position: relative; overflow: hidden;
  display: flex; flex-direction: column; align-items: center;
  padding-top: 38px;
  background: linear-gradient(to bottom right, #f1f6fe, #fff 50%, #eff2fe);
}
.icon { fill: none; stroke: currentColor; stroke-width: 2; stroke-linecap: round; stroke-linejoin: round; }
.logo {
  width: 128px; height: 128px; flex: none; border-radius: 32px;
  display: grid; place-items: center; color: #fff;
  background: linear-gradient(to bottom right, #3563e4, #4d43dc);
  box-shadow: 0 20px 30px -6px rgba(0,0,0,.1), 0 8px 12px -8px rgba(0,0,0,.1);
}
h1 { margin-top: 33px; font-size: 47px; line-height: 64px; font-weight: 700; letter-spacing: -.85px; color: #111827; }
.subtitle { margin-top: 16px; font-size: 31px; line-height: 48px; letter-spacing: -.21px; color: #4b5563; }
.card {
  width: 896px; height: 868px; flex: none; margin-top: 63px; padding: 48px;
  display: flex; flex-direction: column;
  background: #fff; border-radius: 16px; color: #0c0a09;
  font-size: 27.500px;
  box-shadow: 0 40px 50px -10px rgba(0,0,0,.1), 0 16px 20px -12px rgba(0,0,0,.1);
}
.card-title { height: 56px; display: flex; align-items: center; justify-content: center; gap: 17px; }
h2 { font-size: 39px; font-weight: 600; letter-spacing: -1.5px; }
.card-desc { margin: 8px 0 48px; line-height: 40px; text-align: center; letter-spacing: -.06px; color: #78716c; }
.alert {
  height: 188px; display: flex; gap: 24px; padding: 32px;
  border: 2px solid #f2a8a4; border-radius: 16px; color: #df524b;
}
.alert p { margin-top: -6px; line-height: 40px; letter-spacing: -.05px; white-space: nowrap; }
.label { height: 32px; margin: 32px 0 16px; display: flex; align-items: center; gap: 16px; font-weight: 500; }
.input {
  height: 80px; display: flex; align-items: center; justify-content: space-between;
  padding: 0 22px 0 24px; border: 2px solid #e5e5e5; border-radius: 12px;
}
.email { letter-spacing: -.25px; padding-top: 1px; }
.dots { display: flex; gap: 6.900px; padding: 6px 0 0 3px; }
.dots i { width: 6px; height: 6px; border-radius: 50%; background: #0c0a09; }
.eye { color: #9ca3af; }
.submit {
  height: 80px; margin-top: 32px; border-radius: 12px;
  display: flex; align-items: center; justify-content: center; gap: 16px;
  background: linear-gradient(to right, #3563e4, #4d43dc); color: #fff; font-weight: 500;
}
.note, .contact { height: 40px; line-height: 40px; font-size: 27.500px; color: #4b5563; }
.note { margin-top: 64px; display: flex; align-items: center; gap: 8px; letter-spacing: -.05px; }
.contact { margin-top: 16px; letter-spacing: -.12px; }
.dock-shade {
  position: absolute; left: 178px; top: 1458px; width: 2524px; height: 108px;
  border-radius: 40px; box-shadow: 0 0 100px rgba(0,0,0,.28);
}

/* desktop and dock */
.desktop { height: 120px; position: relative; display: flex; justify-content: center; align-items: flex-start; }
.streak { position: absolute; left: 0; top: 0; width: 220px; height: 120px; }
.dock {
  position: relative; width: 2524px; height: 108px; margin-top: 2px;
  display: flex; padding-left: 4px;
  background: #141414; border: 2px solid #3b3a3a; border-radius: 34px;
}
.cell { position: relative; width: 90px; flex: none; display: flex; justify-content: center; }
.cell > svg { width: 70px; height: 70px; margin-top: 14px; }
.cell > .ovpn { width: 76px; height: 76px; margin-top: 11px; }
.cell > .mysql { width: 84px; height: 84px; margin-top: 7px; }
.cell > .wide { width: 74px; height: 74px; margin-left: 4px; }
.cell > .mau { width: 76px; height: 84px; margin-top: 7px; }
.cell > .trash { width: 62px; height: 82px; margin: 8px 2px 0 0; }
.run::after {
  content: ""; position: absolute; left: 40px; top: 94px;
  width: 8px; height: 8px; border-radius: 50%; background: #939393;
}
.badge {
  position: absolute; left: 55px; top: 5px; width: 34px; height: 34px; border-radius: 50%;
  display: grid; place-items: center;
  background: #db4a3b; color: #fff; font-size: 18px; font-weight: 400;
}
.rule { width: 2px; height: 80px; margin: 12px 20px 0; flex: none; background: #4c4c4c; }
.cal-month { font-size: 14px; font-weight: 700; fill: #fff; text-anchor: middle; }
.cal-day { font-size: 44px; font-weight: 300; letter-spacing: -3px; fill: #222; text-anchor: middle; }
```
